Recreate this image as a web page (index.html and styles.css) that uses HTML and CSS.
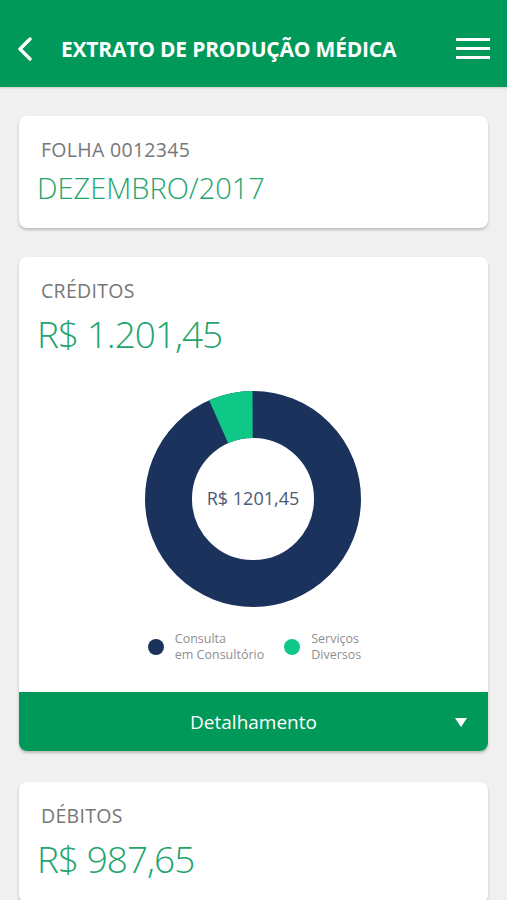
FILE: index.html
```html
<!DOCTYPE html>
<html lang="pt-BR">
<head>
    <meta charset="UTF-8">
    <meta name="viewport" content="width=device-width, initial-scale=1.0">
    <title>Extrato de Produção Médica</title>
    <link rel="stylesheet" href="styles.css">
</head>
<body>
    <header class="topbar">
        <svg class="back" width="16" height="24" viewBox="0 0 16 24">
            <path d="M13 2 L3 12 L13 22" fill="none" stroke="#fff" stroke-width="3.4" stroke-linecap="round" stroke-linejoin="round"/>
        </svg>
        <h1>EXTRATO DE PRODUÇÃO MÉDICA</h1>
        <div class="menu">
            <span></span><span></span><span></span>
        </div>
    </header>

    <main class="content">
        <section class="card">
            <div class="card-body">
                <div class="label">FOLHA 0012345</div>
                <div class="month">DEZEMBRO/2017</div>
            </div>
        </section>

        <section class="card">
            <div class="card-body chart-body">
                <div class="label">CRÉDITOS</div>
                <div class="amount">R$ 1.201,45</div>

                <div class="chart">
                    <svg width="220" height="220" viewBox="0 0 220 220">
                        <circle cx="110" cy="110" r="84.5" fill="none" stroke="#1b335c" stroke-width="47"/>
                        <circle cx="110" cy="110" r="84.5" fill="none" stroke="#0fc787" stroke-width="47"
                                stroke-dasharray="35 500" transform="rotate(-114 110 110)"/>
                        <text x="110" y="116" text-anchor="middle" class="chart-total">R$ 1201,45</text>
                    </svg>
                </div>

                <div class="legend">
                    <div class="legend-item">
                        <span class="dot navy"></span>
                        <span>Consulta<br>em Consultório</span>
                    </div>
                    <div class="legend-item">
                        <span class="dot teal"></span>
                        <span>Serviços<br>Diversos</span>
                    </div>
                </div>
            </div>
            <div class="details">
                <span>Detalhamento</span>
                <span class="caret"></span>
            </div>
        </section>

        <section class="card debits">
            <div class="card-body">
                <div class="label">DÉBITOS</div>
                <div class="amount">R$ 987,65</div>
            </div>
        </section>
    </main>
</body>
</html>
```

FILE: styles.css
```css
body {
    margin: 0;
    background-color: #f0f0f0;
    font-family: "Open Sans", "Noto Sans", sans-serif;
}
.topbar {
    height: 77px;
    background-color: #00995a;
    display: flex;
    align-items: center;
    padding: 10px 17px 0 17px;
    box-shadow: 0 1px 2px rgba(0, 0, 0, 0.15);
}
.back {
    flex: none;
}
.topbar h1 {
    flex: 1;
    margin: 0 0 0 28px;
    color: #fff;
    font-size: 21px;
    font-weight: 700;
    letter-spacing: -0.2px;
}
.menu {
    display: flex;
    flex-direction: column;
    gap: 6px;
    width: 34px;
}
.menu span {
    height: 3px;
    background-color: #fff;
}
.content {
    display: flex;
    flex-direction: column;
    gap: 29px;
    padding: 29px 19px 0 19px;
}
.card {
    background-color: #fff;
    border-radius: 8px;
    box-shadow: 0 2px 3px rgba(0, 0, 0, 0.22);
    overflow: hidden;
}
.debits {
    margin-top: 2px;
}
.card-body {
    padding: 22px 20px 22px 18px;
}
.chart-body {
    padding-bottom: 29px;
}
.label {
    color: #777;
    font-size: 19.5px;
    line-height: 24px;
    padding-left: 4px;
    letter-spacing: 0.3px;
}
.month {
    color: #23a46c;
    font-size: 29px;
    font-weight: 300;
    line-height: 36px;
    margin-top: 8px;
}
.amount {
    color: #23a46c;
    font-size: 37px;
    font-weight: 300;
    line-height: 44px;
    margin-top: 9px;
    letter-spacing: -1px;
}
.chart {
    display: flex;
    justify-content: center;
    margin-top: 33px;
    margin-left: 1px;
}
.chart-total {
    font-family: "Open Sans", sans-serif;
    font-size: 18px;
    fill: #4b5878;
}
.legend {
    display: flex;
    justify-content: center;
    gap: 20px;
    margin-top: 22px;
    margin-left: 4px;
    color: #8f8f8f;
    font-size: 12.5px;
    line-height: 16px;
}
.legend-item {
    display: flex;
    align-items: center;
    gap: 11px;
}
.dot {
    width: 16px;
    height: 16px;
    border-radius: 50%;
}
.dot.navy {
    background-color: #1b335c;
}
.dot.teal {
    background-color: #0fc787;
}
.details {
    height: 59px;
    background-color: #00995a;
    color: #fff;
    font-size: 19px;
    display: flex;
    align-items: center;
    justify-content: center;
    position: relative;
}
.caret {
    position: absolute;
    right: 21px;
    top: 26px;
    border-left: 6px solid transparent;
    border-right: 6px solid transparent;
    border-top: 9px solid #fff;
}
```
